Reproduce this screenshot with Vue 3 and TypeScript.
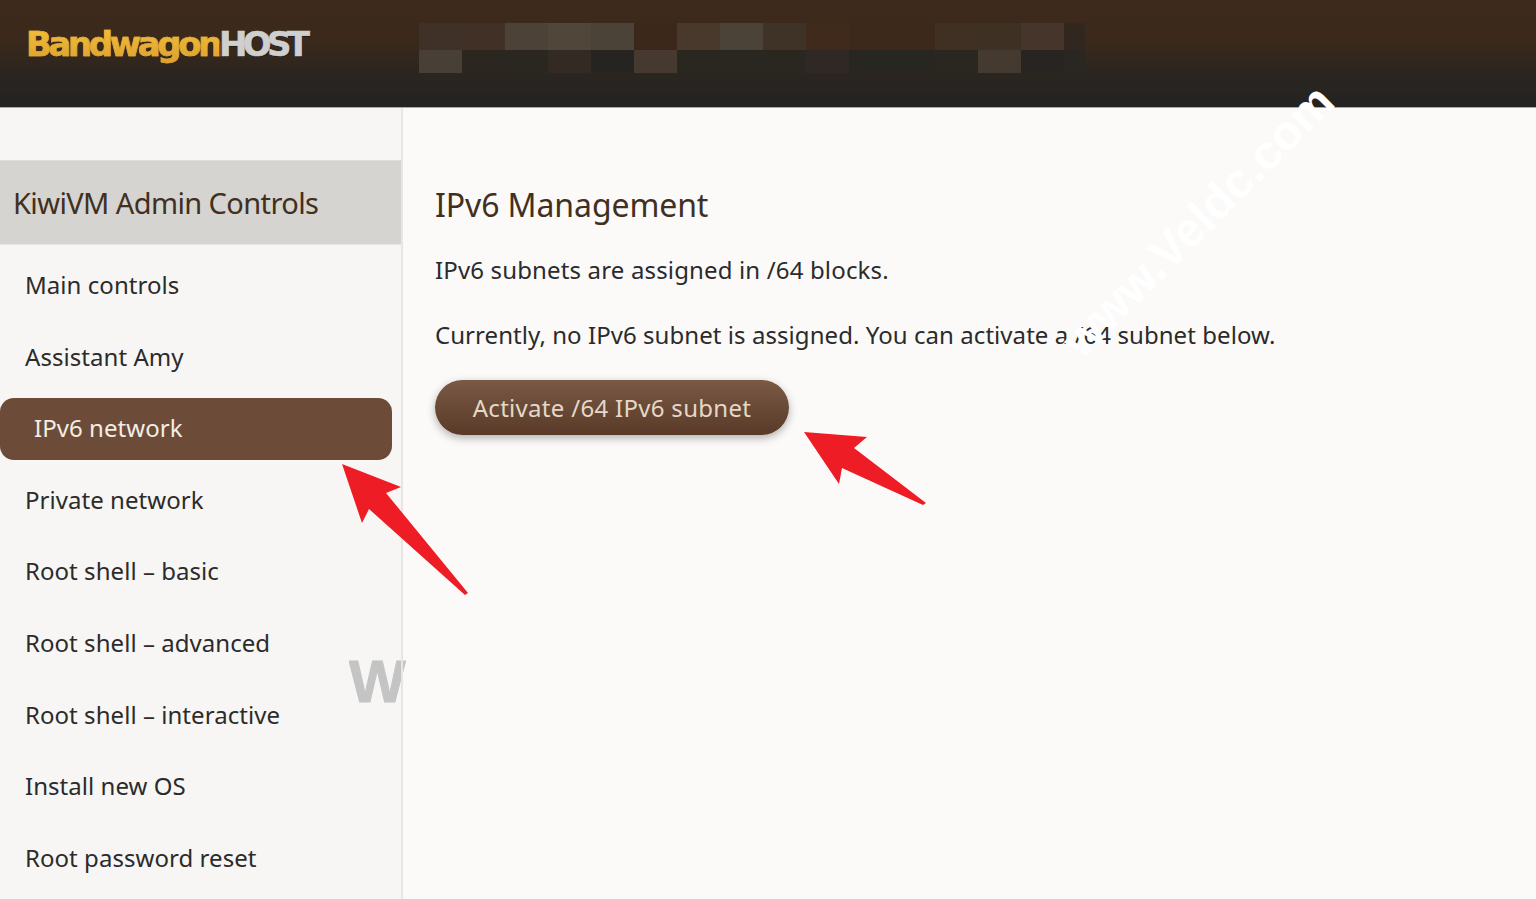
<script setup lang="ts">
const navItems: string[] = [
  'Main controls',
  'Assistant Amy',
  'IPv6 network',
  'Private network',
  'Root shell – basic',
  'Root shell – advanced',
  'Root shell – interactive',
  'Install new OS',
  'Root password reset',
]
const mosaicTop: string[] = ['#3f3127','#403026','#4d4237','#50463a','#4b4338','#3b281b','#48392c','#4b4238','#3f3226','#3f2a1c','#3c291b','#3c291b','#403024','#3f3024','#45352a','#32271e']
const mosaicBottom: string[] = ['#484036','#2b2620','#2a2620','#332a24','#262420','#463a30','#2a2620','#2a2620','#2a2620','#302824','#282621','#282621','#2a2620','#453a30','#272422','#2a2622']
</script>

<template>
  <div class="page">
    <header class="topbar">
      <div class="logo"><span class="logo-gold">Bandwagon</span><span class="logo-grey">HOST</span></div>
    </header>
    <div class="body-row">
      <aside class="sidebar">
        <h3 class="side-title">KiwiVM Admin Controls</h3>
        <ul class="nav">
          <li v-for="item in navItems" :key="item" class="nav-item" :class="{ active: item === 'IPv6 network' }">{{ item }}</li>
        </ul>
      </aside>
      <main class="content">
        <h1 class="title">IPv6 Management</h1>
        <p class="line first">IPv6 subnets are assigned in /64 blocks.</p>
        <p class="line second">Currently, no IPv6 subnet is assigned. You can activate a /64 subnet below.</p>
        <button class="activate" type="button">Activate /64 IPv6 subnet</button>
      </main>
    </div>

    <div class="mosaic" aria-hidden="true">
      <i v-for="(c, i) in mosaicTop" :key="'t' + i" class="cell" :style="{ background: c }"></i>
      <i v-for="(c, i) in mosaicBottom" :key="'b' + i" class="cell" :style="{ background: c }"></i>
    </div>

    <svg class="arrows" viewBox="0 0 1536 899" width="1536" height="899" aria-hidden="true">
      <path fill="#ee1c25" d="M804 432 L867 437 L854 448 L926 503 L923 505 L842 468 L839 484 Z" />
      <path fill="#ee1c25" d="M342 464 L401 487 L386 493 L468 593 L465 595 L369 509 L362 523 Z" />
    </svg>

    <div class="mark-w">W</div>
    <div class="mark-url">www.Veldc.com</div>
  </div>
</template>

<style>
html, body { margin: 0; overflow: hidden; }
</style>

<style scoped>
.page {
  position: relative;
  width: 1536px;
  height: 899px;
  overflow: hidden;
  background: #fbfaf8;
  font-family: "Noto Sans", sans-serif;
  color: #2b2b2b;
}
.topbar {
  height: 108px;
  box-sizing: border-box;
  padding: 24px 0 0 26px;
  background: linear-gradient(180deg, #3d2a1c 0%, #3b291b 35%, #2a2520 72%, #232323 100%);
  border-bottom: 1px solid #a9a8a3;
}
.logo {
  display: flex;
  font-family: "DejaVu Sans", sans-serif;
  font-weight: 700;
  font-size: 34px;
  line-height: 40px;
}
.logo-gold {
  letter-spacing: -3.4px;
  background: linear-gradient(180deg, #f3c13c 0%, #dca02f 100%);
  -webkit-background-clip: text;
  background-clip: text;
  color: transparent;
  -webkit-text-stroke: 0.6px #e3ab32;
}
.logo-grey {
  letter-spacing: -4.7px;
  color: #cfcfcf;
  -webkit-text-stroke: 0.6px #cfcfcf;
  text-shadow: 1px 1px 0 #1a1a1a;
}
.body-row {
  display: flex;
  height: 791px;
}
.sidebar {
  width: 401px;
  flex: none;
  background: #f7f6f4;
  border-right: 2px solid #e8e6e3;
  padding-top: 52px;
}
.side-title {
  margin: 0;
  height: 85px;
  box-sizing: border-box;
  padding-left: 13px;
  background: #d5d4d0;
  border-top: 1px solid #dfdeda;
  border-bottom: 1px solid #e6e5e1;
  font-size: 29px;
  font-weight: 400;
  line-height: 83px;
  color: #41301f;
  letter-spacing: -0.6px;
}
.nav {
  list-style: none;
  margin: 10px 0 0;
  padding: 0;
}
.nav-item {
  height: 62px;
  margin-bottom: 9.6px;
  width: 392px;
  box-sizing: border-box;
  padding-left: 25px;
  font-size: 24px;
  line-height: 60px;
  letter-spacing: 0.05px;
  color: #2b2b2b;
}
.nav-item.active {
  padding-left: 34px;
  background: #6c4c38;
  color: #f4ede4;
  border-radius: 14px;
}
.content {
  flex: 1;
  padding: 76px 0 0 32px;
}
.title {
  margin: 0;
  font-size: 32px;
  font-weight: 400;
  line-height: 42px;
  letter-spacing: -0.1px;
  color: #41301f;
}
.line {
  margin: 0;
  font-size: 24px;
  line-height: 36px;
  color: #2b2b2b;
}
.first { margin-top: 26px; letter-spacing: 0.15px; }
.second { margin-top: 29px; letter-spacing: 0.06px; }
.activate {
  display: block;
  margin-top: 27px;
  width: 354px;
  height: 55px;
  border: 0;
  border-radius: 28px;
  padding: 0;
  background: linear-gradient(180deg, #7a5a45 0%, #593a28 100%);
  box-shadow: 0 3px 8px rgba(0, 0, 0, 0.3);
  color: #e4d8c8;
  font-family: inherit;
  font-size: 24px;
  letter-spacing: 0.3px;
}
.mosaic {
  position: absolute;
  left: 419px;
  top: 23px;
  display: grid;
  grid-template-columns: repeat(15, 43px) 21px;
  grid-template-rows: 27px 23px;
}
.cell { display: block; }
.arrows {
  position: absolute;
  left: 0;
  top: 0;
}
.mark-w {
  position: absolute;
  left: 349px;
  top: 647px;
  width: 57px;
  height: 70px;
  overflow: hidden;
  font-family: "Liberation Sans", sans-serif;
  font-weight: 700;
  font-size: 60px;
  line-height: 70px;
  color: #c4c4c4;
  -webkit-text-stroke: 1px #c4c4c4;
}
.mark-w::after {
  content: "";
  position: absolute;
  left: 52px;
  top: 0;
  bottom: 0;
  width: 2px;
  background: #e8e6e3;
}
.mark-url {
  position: absolute;
  left: 1198px;
  top: 197px;
  width: 0;
  display: flex;
  justify-content: center;
  white-space: nowrap;
  font-family: "Liberation Sans", sans-serif;
  font-weight: 700;
  font-size: 48px;
  line-height: 1;
  color: #ffffff;
  transform: rotate(-45deg);
}
</style>
